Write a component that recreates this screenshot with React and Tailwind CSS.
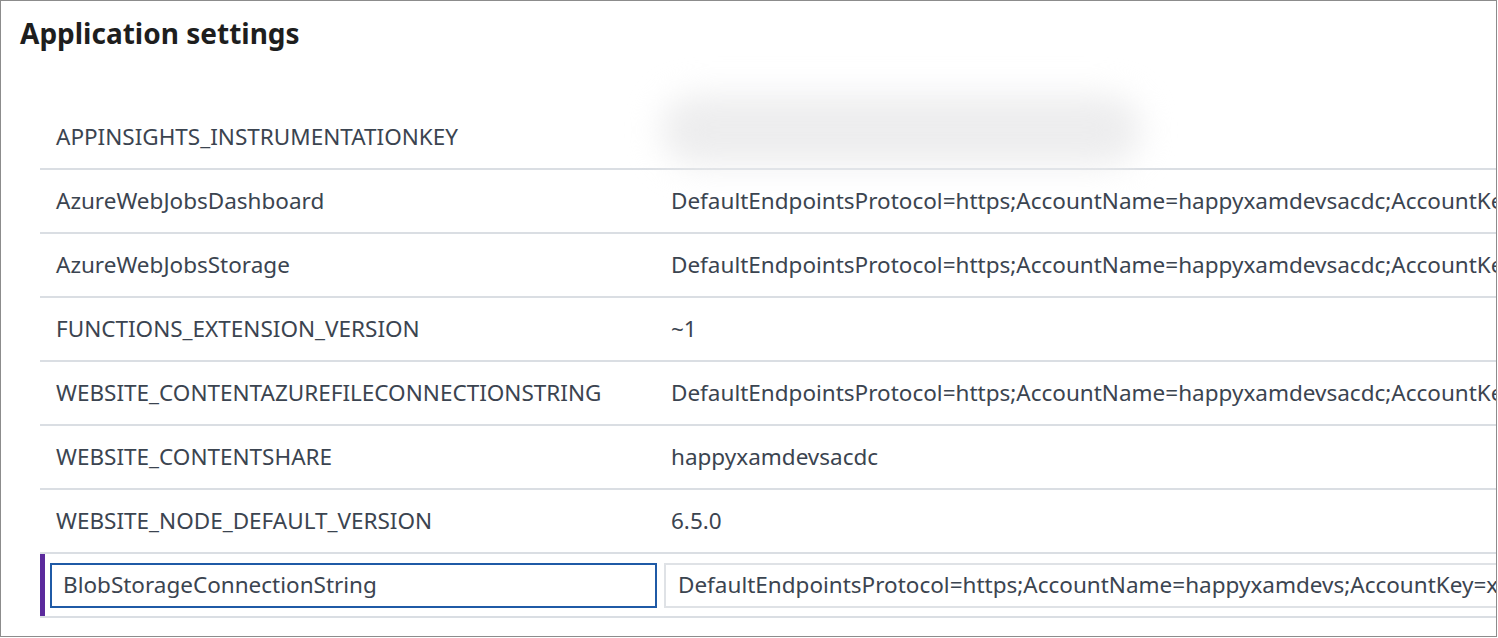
const settings = [
  { name: 'APPINSIGHTS_INSTRUMENTATIONKEY', value: null },
  {
    name: 'AzureWebJobsDashboard',
    value: 'DefaultEndpointsProtocol=https;AccountName=happyxamdevsacdc;AccountKey=xxxxxxxx',
  },
  {
    name: 'AzureWebJobsStorage',
    value: 'DefaultEndpointsProtocol=https;AccountName=happyxamdevsacdc;AccountKey=xxxxxxxx',
  },
  { name: 'FUNCTIONS_EXTENSION_VERSION', value: '~1' },
  {
    name: 'WEBSITE_CONTENTAZUREFILECONNECTIONSTRING',
    value: 'DefaultEndpointsProtocol=https;AccountName=happyxamdevsacdc;AccountKey=xxxxxxxx',
  },
  { name: 'WEBSITE_CONTENTSHARE', value: 'happyxamdevsacdc' },
  { name: 'WEBSITE_NODE_DEFAULT_VERSION', value: '6.5.0' },
];

function SettingRow({ name, value }) {
  return (
    <div className="flex h-[64px] items-center border-b-2 border-[#dadee3]">
      <div className="w-[615px] shrink-0 pl-[16px]">{name}</div>
      <div className="relative min-w-0 flex-1 overflow-hidden whitespace-nowrap pl-[16px]">
        {value === null ? (
          // hidden key, blurred out
          <div className="h-[30px]"></div>
        ) : (
          value
        )}
      </div>
      {value === null && (
        <div className="pointer-events-none absolute left-[660px] top-[94px] h-[70px] w-[480px] rounded-full bg-[#ededee] blur-[16px]"></div>
      )}
    </div>
  );
}

export default function App() {
  return (
    <div
      className="relative h-[637px] w-[1497px] overflow-hidden border border-[#8c8c8c] bg-white text-[#3b4450]"
      style={{ fontFamily: '"Noto Sans", "Open Sans", sans-serif' }}
    >
      <h1 className="pl-[19px] pt-[12px] text-[28px] font-bold leading-[40px] text-[#1e1e1e]">
        Application settings
      </h1>

      <div className="ml-[39px] mt-[53px] text-[22.5px]">
        {settings.map((s) => (
          <SettingRow key={s.name} name={s.name} value={s.value} />
        ))}

        {/* row being edited */}
        <div className="flex h-[64px] border-b-2 border-[#dadee3]">
          <div className="w-[5px] shrink-0 bg-[#5b2a9c]"></div>
          <div className="flex min-w-0 flex-1 items-center gap-[7px] pl-[5px]">
            <div className="flex h-[45px] w-[607px] shrink-0 items-center border-2 border-[#1f5aa6] pl-[11px]">
              BlobStorageConnectionString
            </div>
            <div className="flex h-[45px] min-w-0 flex-1 items-center overflow-hidden whitespace-nowrap border-2 border-r-0 border-[#dfe2e6] pl-[12px]">
              DefaultEndpointsProtocol=https;AccountName=happyxamdevs;AccountKey=xxxxxxxx
            </div>
          </div>
        </div>
      </div>
    </div>
  );
}
